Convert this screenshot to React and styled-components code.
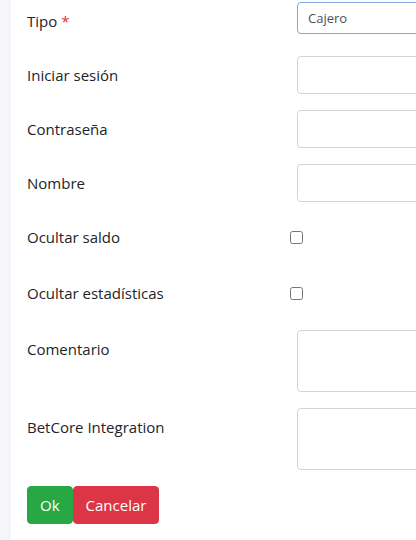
import React, { useState } from 'react';
import styled, { createGlobalStyle } from 'styled-components';

const GlobalStyle = createGlobalStyle`
  html, body {
    margin: 0;
    padding: 0;
    background-color: #f4f6f9;
    overflow: hidden;
  }
  body {
    font-family: "Open Sans", "Noto Sans", Arial, sans-serif;
    color: #212529;
  }
`;

const Card = styled.div`
  margin-left: 11px;
  min-height: 540px;
  background-color: #ffffff;
  overflow: hidden;
`;

const Form = styled.form`
  display: flex;
  flex-direction: column;
  gap: 16px;
  width: 760px;
  padding: 2px 16px 16px 16px;
  box-sizing: border-box;
`;

const Row = styled.div`
  display: grid;
  grid-template-columns: 270px 1fr;
  align-items: start;
  min-height: ${(p) => p.$height || 38}px;
  margin-bottom: ${(p) => p.$extra || 0}px;
`;

const Label = styled.label`
  font-size: 15px;
  line-height: 24px;
  padding-top: 7px;
`;

const Required = styled.span`
  color: #dc3545;
  margin-left: 4px;
`;

const Select = styled.select`
  height: 32px;
  width: 100%;
  box-sizing: border-box;
  padding: 0 10px;
  font-family: "Open Sans", "Noto Sans", Arial, sans-serif;
  font-size: 13px;
  color: #495057;
  background-color: #ffffff;
  border: 1px solid #80a9da;
  border-radius: 4px;
  appearance: none;
  outline: none;
`;

const Input = styled.input`
  height: 38px;
  width: 100%;
  box-sizing: border-box;
  padding: 6px 12px;
  font-size: 15px;
  border: 1px solid #ced4da;
  border-radius: 4px;
  outline: none;
`;

const TextArea = styled.textarea`
  display: block;
  height: 62px;
  width: 100%;
  box-sizing: border-box;
  padding: 6px 12px;
  font-size: 15px;
  border: 1px solid #ced4da;
  border-radius: 4px;
  resize: none;
  outline: none;
`;

const Checkbox = styled.input`
  width: 13px;
  height: 13px;
  margin: 13px 0 0 -7px;
`;

const Actions = styled.div`
  display: flex;
`;

const Button = styled.button`
  height: 38px;
  padding: 6px 12px;
  font-family: "Open Sans", "Noto Sans", Arial, sans-serif;
  font-size: 15px;
  color: #ffffff;
  border: 1px solid ${(p) => p.$color};
  background-color: ${(p) => p.$color};
  border-radius: 4px;
  cursor: pointer;
`;

export default function App() {
  const [form, setForm] = useState({
    tipo: 'cajero',
    login: '',
    password: '',
    nombre: '',
    ocultarSaldo: false,
    ocultarEstadisticas: false,
    comentario: '',
    betcore: ''
  });

  const handleChange = (e) => {
    const { name, value, type, checked } = e.target;
    setForm({ ...form, [name]: type === 'checkbox' ? checked : value });
  };

  return (
    <>
      <GlobalStyle />
      <Card>
        <Form onSubmit={(e) => e.preventDefault()}>
          <Row $height={32} $extra={6}>
            <Label htmlFor="tipo">
              Tipo<Required>*</Required>
            </Label>
            <Select id="tipo" name="tipo" value={form.tipo} onChange={handleChange}>
              <option value="cajero">Cajero</option>
            </Select>
          </Row>

          <Row>
            <Label htmlFor="login">Iniciar sesión</Label>
            <Input id="login" name="login" value={form.login} onChange={handleChange} />
          </Row>

          <Row>
            <Label htmlFor="password">Contraseña</Label>
            <Input
              id="password"
              name="password"
              type="password"
              value={form.password}
              onChange={handleChange}
            />
          </Row>

          <Row>
            <Label htmlFor="nombre">Nombre</Label>
            <Input id="nombre" name="nombre" value={form.nombre} onChange={handleChange} />
          </Row>

          <Row $height={40}>
            <Label htmlFor="ocultarSaldo">Ocultar saldo</Label>
            <div>
              <Checkbox
                type="checkbox"
                id="ocultarSaldo"
                name="ocultarSaldo"
                checked={form.ocultarSaldo}
                onChange={handleChange}
              />
            </div>
          </Row>

          <Row $height={40}>
            <Label htmlFor="ocultarEstadisticas">Ocultar estadísticas</Label>
            <div>
              <Checkbox
                type="checkbox"
                id="ocultarEstadisticas"
                name="ocultarEstadisticas"
                checked={form.ocultarEstadisticas}
                onChange={handleChange}
              />
            </div>
          </Row>

          <Row $height={62}>
            <Label htmlFor="comentario">Comentario</Label>
            <TextArea id="comentario" name="comentario" value={form.comentario} onChange={handleChange} />
          </Row>

          <Row $height={62}>
            <Label htmlFor="betcore">BetCore Integration</Label>
            <TextArea id="betcore" name="betcore" value={form.betcore} onChange={handleChange} />
          </Row>

          <Actions>
            <Button type="submit" $color="#28a745">Ok</Button>
            <Button type="button" $color="#dc3545">Cancelar</Button>
          </Actions>
        </Form>
      </Card>
    </>
  );
}
